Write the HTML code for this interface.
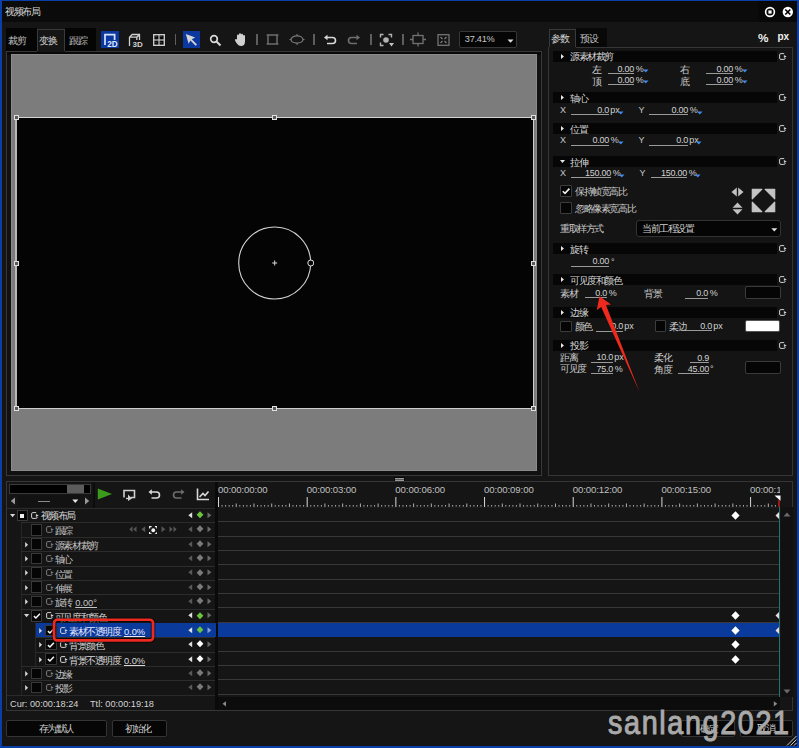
<!DOCTYPE html><html><head><meta charset="utf-8"><style>
*{margin:0;padding:0;box-sizing:border-box}
html,body{width:799px;height:748px;overflow:hidden;background:#151515}
body{position:relative;font-family:"Liberation Sans",sans-serif;color:#c8c8c8;font-size:9px}
div,span,svg{position:absolute}
.t{white-space:nowrap;line-height:1}
.n{font-size:9.5px;color:#c9c9c9}
</style></head><body><div style="left:2px;top:1px;width:795px;height:21px;background:#0b0b0b"></div>
<div style="left:758px;top:1px;width:39px;height:21px;background:#080808"></div>
<span class="t" style="left:5px;top:7px;font-size:9.6px;letter-spacing:-1.4px;color:#d8d8d8">视频布局</span>
<svg style="left:764px;top:6px;" width="12" height="12" viewBox="0 0 12 12"><circle cx="6" cy="6" r="4.4" fill="none" stroke="#fff" stroke-width="1.6"/><rect x="4.4" y="4.4" width="3.2" height="3.2" fill="#fff"/></svg>
<svg style="left:782px;top:6px;" width="12" height="12" viewBox="0 0 12 12"><circle cx="5.8" cy="6" r="5.2" fill="#fff"/><path d="M3.3 3.5L8.3 8.5M8.3 3.5L3.3 8.5" stroke="#000" stroke-width="1.7"/></svg>
<div style="left:6px;top:28px;width:31px;height:23px;background:#050505"></div>
<span class="t" style="left:8.3px;top:36px;font-size:9.6px;letter-spacing:-1.4px;color:#bdbdbd">裁剪</span>
<div style="left:37px;top:29px;width:28px;height:23px;background:#151515;border:1px solid #3a3a3a;border-bottom:none"></div>
<span class="t" style="left:39px;top:36px;font-size:9.6px;letter-spacing:-1.4px;color:#d0d0d0">变换</span>
<div style="left:65px;top:28px;width:31px;height:23px;background:#050505"></div>
<span class="t" style="left:69px;top:36px;font-size:9.6px;letter-spacing:-1.4px;color:#bdbdbd">跟踪</span>
<div style="left:101px;top:31px;width:18px;height:17px;background:#0a389e"></div>
<svg style="left:101px;top:31px;" width="18" height="17" viewBox="0 0 18 17"><path d="M4 14V3.6H13.6V9" fill="none" stroke="#d8e2ff" stroke-width="1.7"/><text x="6.3" y="15.6" font-family="Liberation Sans" font-weight="bold" font-size="8.2" fill="#dfe8ff">2D</text></svg>
<svg style="left:127px;top:32px;" width="18" height="16" viewBox="0 0 18 16"><path d="M2.5 14V5.2L5.2 2.5H12.5V8M2.5 5.2H9.8V8M9.8 5.2L12.5 2.5" fill="none" stroke="#d0d0d0" stroke-width="1.3"/><text x="5.6" y="15.4" font-family="Liberation Sans" font-weight="bold" font-size="8" fill="#d0d0d0">3D</text></svg>
<svg style="left:152px;top:33px;" width="14" height="14" viewBox="0 0 14 14"><rect x="1" y="1" width="12" height="12" fill="#cacaca"/><rect x="2.4" y="2.4" width="4" height="4" fill="#0a0a0a"/><rect x="7.6" y="2.4" width="4" height="4" fill="#0a0a0a"/><rect x="2.4" y="7.6" width="4" height="4" fill="#0a0a0a"/><rect x="7.6" y="7.6" width="4" height="4" fill="#0a0a0a"/><path d="M3.5 3.5h1M8.5 3.5h1M3.5 9.5h1M8.5 9.5h1" stroke="#777" stroke-width="0.8"/></svg>
<div style="left:174.5px;top:34px;width:1.5px;height:11px;background:#5e5e5e"></div>
<div style="left:183px;top:31px;width:17px;height:17px;background:#0a389e"></div>
<svg style="left:183px;top:31px;" width="17" height="17" viewBox="0 0 17 17"><path d="M2.8 3L12.2 6.4L8.8 8.2L14 13.4L12.6 14.8L7.4 9.6L5.6 12.8Z" fill="#d4d4d4"/></svg>
<svg style="left:209px;top:34px;" width="13" height="13" viewBox="0 0 13 13"><circle cx="5" cy="5" r="3.3" fill="none" stroke="#d8d8d8" stroke-width="1.7"/><path d="M7.5 7.5L11.5 11.5" stroke="#d8d8d8" stroke-width="2"/></svg>
<svg style="left:234px;top:32px;" width="13" height="15" viewBox="0 0 13 15"><path d="M3 7V3.5a1 1 0 0 1 2 0V6V2.2a1 1 0 0 1 2 0V6V2.8a1 1 0 0 1 2 0V6.5V4a1 1 0 0 1 2 0V9.5C11 12.5 9.5 14 7 14C5 14 4 13 2.5 11L1 8.5a1 1 0 0 1 1.7-1Z" fill="#d0d0d0"/></svg>
<div style="left:256px;top:34px;width:1.5px;height:11px;background:#5e5e5e"></div>
<svg style="left:266px;top:33px;" width="13" height="13" viewBox="0 0 13 13"><rect x="2" y="2" width="9" height="9" fill="none" stroke="#7a7a7a" stroke-width="1.3"/><path d="M0.5 2H2M11 2H12.5M0.5 11H2M11 11H12.5" stroke="#7a7a7a"/></svg>
<svg style="left:289px;top:33px;" width="16" height="13" viewBox="0 0 16 13"><ellipse cx="8" cy="6.5" rx="6" ry="3.6" fill="none" stroke="#7a7a7a" stroke-width="1.3"/><path d="M8 1V3M8 10V12M0.5 6.5H2M14 6.5H15.5" stroke="#7a7a7a"/></svg>
<div style="left:313px;top:34px;width:1.5px;height:11px;background:#5e5e5e"></div>
<svg style="left:323px;top:34px;" width="14" height="12" viewBox="0 0 14 12"><path d="M3 3.5H9.5A3 3 0 0 1 9.5 9.5H4" fill="none" stroke="#d8d8d8" stroke-width="1.6"/><path d="M1 3.5L4.5 0.8V6.2Z" fill="#d8d8d8"/></svg>
<svg style="left:347px;top:34px;" width="14" height="12" viewBox="0 0 14 12"><path d="M11 3.5H4.5A3 3 0 0 0 4.5 9.5H10" fill="none" stroke="#6e6e6e" stroke-width="1.6"/><path d="M13 3.5L9.5 0.8V6.2Z" fill="#6e6e6e"/></svg>
<div style="left:370px;top:34px;width:1.5px;height:11px;background:#5e5e5e"></div>
<svg style="left:379px;top:33px;" width="16" height="15" viewBox="0 0 16 15"><path d="M1.5 4.5V1.5H4.5M9.5 1.5H12.5V4.5M1.5 9.5V12.5H4.5" fill="none" stroke="#b4b4b4" stroke-width="1.4"/><circle cx="7" cy="7" r="2.8" fill="#b4b4b4"/><path d="M10 10H15L12.5 13.5Z" fill="#c0c0c0"/></svg>
<div style="left:402px;top:34px;width:1.5px;height:11px;background:#5e5e5e"></div>
<svg style="left:410px;top:32px;" width="16" height="15" viewBox="0 0 16 15"><rect x="3" y="3.5" width="10" height="8" fill="none" stroke="#727272" stroke-width="1.3"/><path d="M8 0.5V3.5M8 11.5V14.5M0 7.5H3M13 7.5H16" stroke="#727272" stroke-width="1.3"/></svg>
<svg style="left:437px;top:34px;" width="13" height="12" viewBox="0 0 13 12"><rect x="1" y="0.7" width="11" height="10.6" fill="none" stroke="#7a7a7a" stroke-width="1.2"/><path d="M3.5 3L5.5 5M9.5 3L7.5 5M3.5 9L5.5 7M9.5 9L7.5 7" stroke="#7a7a7a" stroke-width="1.2"/></svg>
<div style="left:459px;top:31px;width:58px;height:17px;background:#050505;border:1px solid #363636;border-radius:2px"></div>
<span class="t" style="left:464.8px;top:35.2px;font-size:9.2px;letter-spacing:-0.25px;color:#c6c6c6">37.41%</span>
<svg style="left:507px;top:38.5px;" width="8" height="5" viewBox="0 0 8 5"><path d="M0.5 0.5H6.5L3.5 3.8Z" fill="#e0e0e0"/></svg>
<div style="left:6px;top:51px;width:536px;height:425px;background:#111111;border:1px solid #383838"></div>
<div style="left:7px;top:52px;width:534px;height:3px;background:#080808"></div>
<div style="left:37px;top:51px;width:28px;height:1px;background:#151515"></div>
<div style="left:11px;top:54px;width:526px;height:417px;background:#7c7c7c;border:1px solid #8a8a8a"></div>
<div style="left:16px;top:117px;width:517px;height:292px;background:#040404"></div>
<div style="left:16px;top:117px;width:518px;height:1px;background:#d4d4d4"></div>
<div style="left:16px;top:408px;width:518px;height:1px;background:#cccccc"></div>
<div style="left:15px;top:117px;width:2px;height:292px;background:#b8b8b8"></div>
<div style="left:533px;top:117px;width:1px;height:292px;background:#cccccc"></div>
<div style="left:13.5px;top:115.0px;width:5px;height:5px;border:1px solid #e0e0e0;background:#5a5a5a"></div>
<div style="left:13.5px;top:260.5px;width:5px;height:5px;border:1px solid #e0e0e0;background:#5a5a5a"></div>
<div style="left:13.5px;top:406.0px;width:5px;height:5px;border:1px solid #e0e0e0;background:#5a5a5a"></div>
<div style="left:272.0px;top:115.0px;width:5px;height:5px;border:1px solid #e0e0e0;background:#5a5a5a"></div>
<div style="left:272.0px;top:406.0px;width:5px;height:5px;border:1px solid #e0e0e0;background:#5a5a5a"></div>
<div style="left:530.5px;top:115.0px;width:5px;height:5px;border:1px solid #e0e0e0;background:#5a5a5a"></div>
<div style="left:530.5px;top:260.5px;width:5px;height:5px;border:1px solid #e0e0e0;background:#5a5a5a"></div>
<div style="left:530.5px;top:406.0px;width:5px;height:5px;border:1px solid #e0e0e0;background:#5a5a5a"></div>
<svg style="left:236px;top:224px;" width="78" height="78" viewBox="0 0 78 78"><circle cx="38.7" cy="39" r="36" fill="none" stroke="#d4d4d4" stroke-width="1.1"/><path d="M38.7 36.5V41.5M36.2 39H41.2" stroke="#ddd" stroke-width="1"/><circle cx="74.8" cy="39" r="3" fill="#050505" stroke="#e0e0e0" stroke-width="1"/></svg>
<div style="left:549px;top:29px;width:27px;height:19px;background:#151515;border:1px solid #3a3a3a;border-bottom:none"></div>
<span class="t" style="left:551px;top:34px;font-size:9.6px;letter-spacing:-1.4px;color:#d0d0d0">参数</span>
<div style="left:576px;top:28px;width:31px;height:19px;background:#080808"></div>
<span class="t" style="left:580px;top:34px;font-size:9.6px;letter-spacing:-1.4px;color:#bdbdbd">预设</span>
<span class="t" style="left:757.5px;top:32.6px;letter-spacing:0;font-size:10.5px;font-weight:bold;color:#f0f0f0;transform:scaleX(1.12);transform-origin:left">%</span>
<span class="t" style="left:777.5px;top:32.3px;letter-spacing:0;font-size:10px;font-weight:bold;color:#f0f0f0">px</span>
<div style="left:548px;top:47px;width:245px;height:429px;border:1px solid #363636;background:#141414"></div>
<div style="left:549px;top:47px;width:27px;height:1px;background:#151515"></div>
<div style="left:553px;top:50.5px;width:224px;height:11px;background:#060606"></div>
<svg style="left:561px;top:53.5px;" width="4" height="6" viewBox="0 0 4 6"><path d="M0 0V5L3 2.5Z" fill="#e8e8e8"/></svg>
<span class="t" style="left:570px;top:52.0px;font-size:9.6px;letter-spacing:-1.4px;color:#d6d6d6">源素材裁剪</span>
<svg style="left:778.8px;top:52.5px;" width="8" height="7" viewBox="0 0 8 7"><path d="M5.2 0.6H1.9Q0.6 0.6 0.6 1.9V5.1Q0.6 6.4 1.9 6.4H4.9Q6.2 6.4 6.2 5.1V4.9" fill="none" stroke="#d0d0d0" stroke-width="1"/><path d="M4.9 2.1L7.7 3.5L4.9 4.9Z" fill="#d0d0d0"/></svg>
<span class="t" style="left:592px;top:64.5px;font-size:9.6px;letter-spacing:-1.4px;">左</span>
<div style="left:607.5px;top:73px;width:26.5px;height:1px;background:#9a9a9a"></div>
<span class="t" style="right:165px;top:64.5px;font-size:9px;letter-spacing:-0.25px;color:#d2d2d2">0.00</span>
<span class="t" style="left:635.8px;top:64.5px;letter-spacing:0;font-size:9px;color:#d2d2d2">%</span>
<svg style="left:643px;top:69px;" width="6" height="4" viewBox="0 0 6 4"><path d="M0 0.5H5.5L2.75 3.5Z" fill="#3d8ef0"/></svg>
<span class="t" style="left:592px;top:76.5px;font-size:9.6px;letter-spacing:-1.4px;">顶</span>
<div style="left:607.5px;top:84px;width:26.5px;height:1px;background:#9a9a9a"></div>
<span class="t" style="right:165px;top:75.5px;font-size:9px;letter-spacing:-0.25px;color:#d2d2d2">0.00</span>
<span class="t" style="left:635.8px;top:75.5px;letter-spacing:0;font-size:9px;color:#d2d2d2">%</span>
<svg style="left:643px;top:80px;" width="6" height="4" viewBox="0 0 6 4"><path d="M0 0.5H5.5L2.75 3.5Z" fill="#3d8ef0"/></svg>
<span class="t" style="left:680px;top:64.5px;font-size:9.6px;letter-spacing:-1.4px;">右</span>
<div style="left:706px;top:73px;width:27px;height:1px;background:#9a9a9a"></div>
<span class="t" style="right:66px;top:64.5px;font-size:9px;letter-spacing:-0.25px;color:#d2d2d2">0.00</span>
<span class="t" style="left:734.8px;top:64.5px;letter-spacing:0;font-size:9px;color:#d2d2d2">%</span>
<svg style="left:742px;top:69px;" width="6" height="4" viewBox="0 0 6 4"><path d="M0 0.5H5.5L2.75 3.5Z" fill="#3d8ef0"/></svg>
<span class="t" style="left:680px;top:76.5px;font-size:9.6px;letter-spacing:-1.4px;">底</span>
<div style="left:706px;top:84px;width:27px;height:1px;background:#9a9a9a"></div>
<span class="t" style="right:66px;top:75.5px;font-size:9px;letter-spacing:-0.25px;color:#d2d2d2">0.00</span>
<span class="t" style="left:734.8px;top:75.5px;letter-spacing:0;font-size:9px;color:#d2d2d2">%</span>
<svg style="left:742px;top:80px;" width="6" height="4" viewBox="0 0 6 4"><path d="M0 0.5H5.5L2.75 3.5Z" fill="#3d8ef0"/></svg>
<div style="left:553px;top:92px;width:224px;height:11px;background:#060606"></div>
<svg style="left:561px;top:95px;" width="4" height="6" viewBox="0 0 4 6"><path d="M0 0V5L3 2.5Z" fill="#e8e8e8"/></svg>
<span class="t" style="left:570px;top:93.5px;font-size:9.6px;letter-spacing:-1.4px;color:#d6d6d6">轴心</span>
<svg style="left:778.8px;top:94px;" width="8" height="7" viewBox="0 0 8 7"><path d="M5.2 0.6H1.9Q0.6 0.6 0.6 1.9V5.1Q0.6 6.4 1.9 6.4H4.9Q6.2 6.4 6.2 5.1V4.9" fill="none" stroke="#d0d0d0" stroke-width="1"/><path d="M4.9 2.1L7.7 3.5L4.9 4.9Z" fill="#d0d0d0"/></svg>
<span class="t" style="left:560px;top:106px;letter-spacing:0;font-size:9px">X</span>
<div style="left:571px;top:114px;width:38px;height:1px;background:#9a9a9a"></div>
<span class="t" style="right:190px;top:105.5px;font-size:9px;letter-spacing:-0.25px;color:#d2d2d2">0.0</span>
<span class="t" style="left:610.2px;top:105.5px;letter-spacing:0;font-size:9px;color:#d2d2d2">px</span>
<svg style="left:618px;top:111px;" width="6" height="4" viewBox="0 0 6 4"><path d="M0 0.5H5.5L2.75 3.5Z" fill="#3d8ef0"/></svg>
<span class="t" style="left:638.5px;top:106px;letter-spacing:0;font-size:9px">Y</span>
<div style="left:649px;top:114px;width:39px;height:1px;background:#9a9a9a"></div>
<span class="t" style="right:111px;top:105.5px;font-size:9px;letter-spacing:-0.25px;color:#d2d2d2">0.00</span>
<span class="t" style="left:689.8px;top:105.5px;letter-spacing:0;font-size:9px;color:#d2d2d2">%</span>
<svg style="left:697px;top:111px;" width="6" height="4" viewBox="0 0 6 4"><path d="M0 0.5H5.5L2.75 3.5Z" fill="#3d8ef0"/></svg>
<div style="left:553px;top:123px;width:224px;height:11px;background:#060606"></div>
<svg style="left:561px;top:126px;" width="4" height="6" viewBox="0 0 4 6"><path d="M0 0V5L3 2.5Z" fill="#e8e8e8"/></svg>
<span class="t" style="left:570px;top:124.5px;font-size:9.6px;letter-spacing:-1.4px;color:#d6d6d6">位置</span>
<svg style="left:778.8px;top:125px;" width="8" height="7" viewBox="0 0 8 7"><path d="M5.2 0.6H1.9Q0.6 0.6 0.6 1.9V5.1Q0.6 6.4 1.9 6.4H4.9Q6.2 6.4 6.2 5.1V4.9" fill="none" stroke="#d0d0d0" stroke-width="1"/><path d="M4.9 2.1L7.7 3.5L4.9 4.9Z" fill="#d0d0d0"/></svg>
<span class="t" style="left:560px;top:136px;letter-spacing:0;font-size:9px">X</span>
<div style="left:571px;top:144.5px;width:38px;height:1px;background:#9a9a9a"></div>
<span class="t" style="right:190px;top:136.0px;font-size:9px;letter-spacing:-0.25px;color:#d2d2d2">0.00</span>
<span class="t" style="left:610.8px;top:136.0px;letter-spacing:0;font-size:9px;color:#d2d2d2">%</span>
<svg style="left:618px;top:141px;" width="6" height="4" viewBox="0 0 6 4"><path d="M0 0.5H5.5L2.75 3.5Z" fill="#3d8ef0"/></svg>
<span class="t" style="left:638.5px;top:136px;letter-spacing:0;font-size:9px">Y</span>
<div style="left:649px;top:144.5px;width:39px;height:1px;background:#9a9a9a"></div>
<span class="t" style="right:111px;top:136.0px;font-size:9px;letter-spacing:-0.25px;color:#d2d2d2">0.0</span>
<span class="t" style="left:689.2px;top:136.0px;letter-spacing:0;font-size:9px;color:#d2d2d2">px</span>
<svg style="left:696px;top:141px;" width="6" height="4" viewBox="0 0 6 4"><path d="M0 0.5H5.5L2.75 3.5Z" fill="#3d8ef0"/></svg>
<div style="left:553px;top:156px;width:224px;height:11px;background:#060606"></div>
<svg style="left:560px;top:160px;" width="6" height="4" viewBox="0 0 6 4"><path d="M0 0H5L2.5 3Z" fill="#e8e8e8"/></svg>
<span class="t" style="left:570px;top:157.5px;font-size:9.6px;letter-spacing:-1.4px;color:#d6d6d6">拉伸</span>
<svg style="left:778.8px;top:158px;" width="8" height="7" viewBox="0 0 8 7"><path d="M5.2 0.6H1.9Q0.6 0.6 0.6 1.9V5.1Q0.6 6.4 1.9 6.4H4.9Q6.2 6.4 6.2 5.1V4.9" fill="none" stroke="#d0d0d0" stroke-width="1"/><path d="M4.9 2.1L7.7 3.5L4.9 4.9Z" fill="#d0d0d0"/></svg>
<span class="t" style="left:560px;top:169px;letter-spacing:0;font-size:9px">X</span>
<div style="left:571px;top:177px;width:40px;height:1px;background:#9a9a9a"></div>
<span class="t" style="right:188px;top:168.5px;font-size:9px;letter-spacing:-0.25px;color:#d2d2d2">150.00</span>
<span class="t" style="left:612.8px;top:168.5px;letter-spacing:0;font-size:9px;color:#d2d2d2">%</span>
<svg style="left:619px;top:174px;" width="6" height="4" viewBox="0 0 6 4"><path d="M0 0.5H5.5L2.75 3.5Z" fill="#3d8ef0"/></svg>
<span class="t" style="left:639.5px;top:169px;letter-spacing:0;font-size:9px">Y</span>
<div style="left:651px;top:177px;width:36px;height:1px;background:#9a9a9a"></div>
<span class="t" style="right:112px;top:168.5px;font-size:9px;letter-spacing:-0.25px;color:#d2d2d2">150.00</span>
<span class="t" style="left:688.8px;top:168.5px;letter-spacing:0;font-size:9px;color:#d2d2d2">%</span>
<svg style="left:695px;top:174px;" width="6" height="4" viewBox="0 0 6 4"><path d="M0 0.5H5.5L2.75 3.5Z" fill="#3d8ef0"/></svg>
<div style="left:560px;top:185px;width:12px;height:12px;background:#050505;border:1px solid #3c3c3c;border-radius:1px"></div>
<svg style="left:560px;top:185px;" width="12" height="12" viewBox="0 0 12 12"><path d="M2.8 6.2L5 8.4L9.4 3.6" fill="none" stroke="#f0f0f0" stroke-width="1.6"/></svg>
<span class="t" style="left:575px;top:186.5px;font-size:9.6px;letter-spacing:-1.4px;">保持帧宽高比</span>
<div style="left:560px;top:202px;width:12px;height:12px;background:#050505;border:1px solid #3c3c3c;border-radius:1px"></div>
<span class="t" style="left:575px;top:203.5px;font-size:9.6px;letter-spacing:-1.4px;">忽略像素宽高比</span>
<svg style="left:731px;top:187px;" width="13" height="10" viewBox="0 0 13 10"><path d="M5.8 0.5V9.5L0.5 5Z M7.2 0.5V9.5L12.5 5Z" fill="#c0c0c0"/></svg>
<svg style="left:732px;top:202px;" width="11" height="13" viewBox="0 0 11 13"><path d="M0.5 5.8H10.5L5.5 0.5Z M0.5 7.2H10.5L5.5 12.5Z" fill="#c0c0c0"/></svg>
<svg style="left:750.5px;top:187.5px;" width="25" height="25" viewBox="0 0 25 25"><path d="M1.3 1.3H10.8L1.3 10.8Z M23.7 1.3H14.2L23.7 10.8Z M1.3 23.7H10.8L1.3 14.2Z M23.7 23.7H14.2L23.7 14.2Z" fill="#c4c4c4" stroke="#c4c4c4" stroke-width="1.2" stroke-linejoin="round"/></svg>
<span class="t" style="left:560px;top:223.5px;font-size:9.6px;letter-spacing:-1.4px;">重取样方式</span>
<div style="left:636px;top:220px;width:145px;height:17px;background:#050505;border:1px solid #333;border-radius:3px"></div>
<span class="t" style="left:642px;top:224px;font-size:9.6px;letter-spacing:-1.4px;color:#d0d0d0">当前工程设置</span>
<svg style="left:771px;top:228px;" width="7" height="4" viewBox="0 0 7 4"><path d="M0.3 0.3H6.3L3.3 3.4Z" fill="#e0e0e0"/></svg>
<div style="left:553px;top:243px;width:224px;height:11px;background:#060606"></div>
<svg style="left:561px;top:246px;" width="4" height="6" viewBox="0 0 4 6"><path d="M0 0V5L3 2.5Z" fill="#e8e8e8"/></svg>
<span class="t" style="left:570px;top:244.5px;font-size:9.6px;letter-spacing:-1.4px;color:#d6d6d6">旋转</span>
<svg style="left:778.8px;top:245px;" width="8" height="7" viewBox="0 0 8 7"><path d="M5.2 0.6H1.9Q0.6 0.6 0.6 1.9V5.1Q0.6 6.4 1.9 6.4H4.9Q6.2 6.4 6.2 5.1V4.9" fill="none" stroke="#d0d0d0" stroke-width="1"/><path d="M4.9 2.1L7.7 3.5L4.9 4.9Z" fill="#d0d0d0"/></svg>
<div style="left:571px;top:265.5px;width:38px;height:1px;background:#9a9a9a"></div>
<span class="t" style="right:190px;top:257.0px;font-size:9px;letter-spacing:-0.25px;color:#d2d2d2">0.00</span>
<span class="t" style="left:611px;top:257.5px;letter-spacing:0;font-size:9px;color:#cfcfcf">°</span>
<div style="left:553px;top:274px;width:224px;height:11px;background:#060606"></div>
<svg style="left:561px;top:277px;" width="4" height="6" viewBox="0 0 4 6"><path d="M0 0V5L3 2.5Z" fill="#e8e8e8"/></svg>
<span class="t" style="left:570px;top:275.5px;font-size:9.6px;letter-spacing:-1.4px;color:#d6d6d6">可见度和颜色</span>
<svg style="left:778.8px;top:276px;" width="8" height="7" viewBox="0 0 8 7"><path d="M5.2 0.6H1.9Q0.6 0.6 0.6 1.9V5.1Q0.6 6.4 1.9 6.4H4.9Q6.2 6.4 6.2 5.1V4.9" fill="none" stroke="#d0d0d0" stroke-width="1"/><path d="M4.9 2.1L7.7 3.5L4.9 4.9Z" fill="#d0d0d0"/></svg>
<span class="t" style="left:560px;top:288.5px;font-size:9.6px;letter-spacing:-1.4px;">素材</span>
<div style="left:585px;top:297px;width:22px;height:1px;background:#9a9a9a"></div>
<span class="t" style="right:192px;top:288.5px;font-size:9px;letter-spacing:-0.25px;color:#d2d2d2">0.0</span>
<span class="t" style="left:608.8px;top:288.5px;letter-spacing:0;font-size:9px;color:#d2d2d2">%</span>
<span class="t" style="left:644px;top:288.5px;font-size:9.6px;letter-spacing:-1.4px;">背景</span>
<div style="left:685px;top:297.5px;width:23px;height:1px;background:#9a9a9a"></div>
<span class="t" style="right:91px;top:289.0px;font-size:9px;letter-spacing:-0.25px;color:#d2d2d2">0.0</span>
<span class="t" style="left:709.8px;top:289.0px;letter-spacing:0;font-size:9px;color:#d2d2d2">%</span>
<div style="left:744.5px;top:286px;width:36px;height:13px;background:#050505;border:1px solid #3a3a3a;border-radius:2px"></div>
<div style="left:553px;top:306.5px;width:224px;height:11px;background:#060606"></div>
<svg style="left:561px;top:309.5px;" width="4" height="6" viewBox="0 0 4 6"><path d="M0 0V5L3 2.5Z" fill="#e8e8e8"/></svg>
<span class="t" style="left:570px;top:308.0px;font-size:9.6px;letter-spacing:-1.4px;color:#d6d6d6">边缘</span>
<svg style="left:778.8px;top:308.5px;" width="8" height="7" viewBox="0 0 8 7"><path d="M5.2 0.6H1.9Q0.6 0.6 0.6 1.9V5.1Q0.6 6.4 1.9 6.4H4.9Q6.2 6.4 6.2 5.1V4.9" fill="none" stroke="#d0d0d0" stroke-width="1"/><path d="M4.9 2.1L7.7 3.5L4.9 4.9Z" fill="#d0d0d0"/></svg>
<div style="left:560px;top:320.5px;width:11.5px;height:11.5px;background:#050505;border:1px solid #3c3c3c;border-radius:1px"></div>
<span class="t" style="left:574.5px;top:321.5px;font-size:9.6px;letter-spacing:-1.4px;">颜色</span>
<div style="left:596px;top:330.5px;width:27px;height:1px;background:#9a9a9a"></div>
<span class="t" style="right:176px;top:322.0px;font-size:9px;letter-spacing:-0.25px;color:#d2d2d2">0.0</span>
<span class="t" style="left:624.2px;top:322.0px;letter-spacing:0;font-size:9px;color:#d2d2d2">px</span>
<div style="left:654.5px;top:320px;width:11.5px;height:11.5px;background:#050505;border:1px solid #3c3c3c;border-radius:1px"></div>
<span class="t" style="left:669px;top:321.5px;font-size:9.6px;letter-spacing:-1.4px;">柔边</span>
<div style="left:686px;top:330px;width:26px;height:1px;background:#9a9a9a"></div>
<span class="t" style="right:87px;top:321.5px;font-size:9px;letter-spacing:-0.25px;color:#d2d2d2">0.0</span>
<span class="t" style="left:713.2px;top:321.5px;letter-spacing:0;font-size:9px;color:#d2d2d2">px</span>
<div style="left:745px;top:320px;width:35px;height:12px;background:#ffffff;border:1px solid #555;border-radius:2px"></div>
<div style="left:553px;top:339.5px;width:224px;height:11px;background:#060606"></div>
<svg style="left:561px;top:342.5px;" width="4" height="6" viewBox="0 0 4 6"><path d="M0 0V5L3 2.5Z" fill="#e8e8e8"/></svg>
<span class="t" style="left:570px;top:341.0px;font-size:9.6px;letter-spacing:-1.4px;color:#d6d6d6">投影</span>
<svg style="left:778.8px;top:341.5px;" width="8" height="7" viewBox="0 0 8 7"><path d="M5.2 0.6H1.9Q0.6 0.6 0.6 1.9V5.1Q0.6 6.4 1.9 6.4H4.9Q6.2 6.4 6.2 5.1V4.9" fill="none" stroke="#d0d0d0" stroke-width="1"/><path d="M4.9 2.1L7.7 3.5L4.9 4.9Z" fill="#d0d0d0"/></svg>
<span class="t" style="left:560px;top:353px;font-size:9.6px;letter-spacing:-1.4px;">距离</span>
<div style="left:591px;top:361.5px;width:22px;height:1px;background:#9a9a9a"></div>
<span class="t" style="right:186px;top:353.0px;font-size:9px;letter-spacing:-0.25px;color:#d2d2d2">10.0</span>
<span class="t" style="left:614.2px;top:353.0px;letter-spacing:0;font-size:9px;color:#d2d2d2">px</span>
<span class="t" style="left:560px;top:363.5px;font-size:9.6px;letter-spacing:-1.4px;">可见度</span>
<div style="left:591px;top:373px;width:22px;height:1px;background:#9a9a9a"></div>
<span class="t" style="right:186px;top:364.5px;font-size:9px;letter-spacing:-0.25px;color:#d2d2d2">75.0</span>
<span class="t" style="left:614.8px;top:364.5px;letter-spacing:0;font-size:9px;color:#d2d2d2">%</span>
<span class="t" style="left:654px;top:353px;font-size:9.6px;letter-spacing:-1.4px;">柔化</span>
<div style="left:690px;top:362px;width:19px;height:1px;background:#9a9a9a"></div>
<span class="t" style="right:90px;top:353.5px;font-size:9px;letter-spacing:-0.25px;color:#d2d2d2">0.9</span>
<span class="t" style="left:654px;top:364.5px;font-size:9.6px;letter-spacing:-1.4px;">角度</span>
<div style="left:678px;top:373px;width:31px;height:1px;background:#9a9a9a"></div>
<span class="t" style="right:90px;top:364.5px;font-size:9px;letter-spacing:-0.25px;color:#d2d2d2">45.00</span>
<span class="t" style="left:710px;top:365px;letter-spacing:0;font-size:9px;color:#cfcfcf">°</span>
<div style="left:744.5px;top:360.5px;width:36px;height:13px;background:#050505;border:1px solid #3a3a3a;border-radius:2px"></div>
<div style="left:394px;top:477px;width:11px;height:5px;background:#060606"></div>
<div style="left:395px;top:478px;width:9px;height:3px;background:#9a9a9a"></div>
<div style="left:395px;top:479px;width:9px;height:1px;background:#5a5a5a"></div>
<div style="left:6px;top:481px;width:787px;height:230px;border:1px solid #363636;background:#151515"></div>
<div style="left:8.5px;top:483.5px;width:82px;height:10px;background:#000;border:1px solid #3a3a3a"></div>
<div style="left:67px;top:484.5px;width:17px;height:8px;background:#5c5c5c"></div>
<svg style="left:10px;top:497px;" width="6" height="8" viewBox="0 0 6 8"><path d="M5 0.5V7.5L0.8 4Z" fill="#9a9a9a"/></svg>
<div style="left:18px;top:495px;width:62px;height:12px;background:#121212"></div>
<div style="left:38px;top:500.5px;width:12px;height:1.2px;background:#8a8a8a"></div>
<svg style="left:72px;top:499px;" width="7" height="5" viewBox="0 0 7 5"><path d="M0.3 0.5H6.3L3.3 4Z" fill="#e6e6e6"/></svg>
<svg style="left:83.5px;top:497px;" width="6" height="8" viewBox="0 0 6 8"><path d="M1 0.5V7.5L5.2 4Z" fill="#9a9a9a"/></svg>
<div style="left:93px;top:482px;width:1.5px;height:26px;background:#0c0c0c"></div>
<svg style="left:97px;top:488px;" width="16" height="12" viewBox="0 0 16 12"><path d="M0.8 0.5V11.5L15 6Z" fill="#3c9a1c"/></svg>
<svg style="left:122px;top:489px;" width="15" height="13" viewBox="0 0 15 13"><path d="M2 8.5V1.5H12.5V8.5H9" fill="none" stroke="#d0d0d0" stroke-width="1.6"/><path d="M6 5.5V12L10 9.5Z" fill="#d0d0d0"/><path d="M4 9.5H7" stroke="#d0d0d0" stroke-width="1.4"/></svg>
<svg style="left:148px;top:489px;" width="13" height="11" viewBox="0 0 13 11"><path d="M3 3H8.5A3 3 0 0 1 8.5 9H3.5" fill="none" stroke="#d8d8d8" stroke-width="1.6"/><path d="M0.5 3L3.8 0.3V5.7Z" fill="#d8d8d8"/></svg>
<svg style="left:172px;top:489px;" width="13" height="11" viewBox="0 0 13 11"><path d="M10 3H4.5A3 3 0 0 0 4.5 9H9.5" fill="none" stroke="#6e6e6e" stroke-width="1.6"/><path d="M12.5 3L9.2 0.3V5.7Z" fill="#6e6e6e"/></svg>
<svg style="left:196px;top:488px;" width="14" height="13" viewBox="0 0 14 13"><path d="M1.5 0.5V11.5H13" fill="none" stroke="#d8d8d8" stroke-width="1.6"/><path d="M3.5 9L7 5.5L9 7.5L12.5 3.5" fill="none" stroke="#d8d8d8" stroke-width="1.6"/></svg>
<div style="left:215px;top:482px;width:3px;height:228px;background:#0a0a0a"></div>
<div style="left:218px;top:482px;width:562px;height:26px;overflow:hidden"><span class="t" style="left:0.00px;top:2.7px;font-size:9.6px;letter-spacing:-0.1px;color:#c0c0c0">00:00:00:00</span><span class="t" style="left:88.68px;top:2.7px;font-size:9.6px;letter-spacing:-0.1px;color:#c0c0c0">00:00:03:00</span><span class="t" style="left:177.36px;top:2.7px;font-size:9.6px;letter-spacing:-0.1px;color:#c0c0c0">00:00:06:00</span><span class="t" style="left:266.04px;top:2.7px;font-size:9.6px;letter-spacing:-0.1px;color:#c0c0c0">00:00:09:00</span><span class="t" style="left:354.72px;top:2.7px;font-size:9.6px;letter-spacing:-0.1px;color:#c0c0c0">00:00:12:00</span><span class="t" style="left:443.40px;top:2.7px;font-size:9.6px;letter-spacing:-0.1px;color:#c0c0c0">00:00:15:00</span><span class="t" style="left:532.08px;top:2.7px;font-size:9.6px;letter-spacing:-0.1px;color:#c0c0c0">00:00:18:00</span><svg style="left:0;top:0" width="562" height="26"><rect x="0.00" y="15" width="1" height="10" fill="#d8d8d8"/><rect x="3.55" y="23" width="1" height="1.6" fill="#a8a8a8"/><rect x="7.09" y="23" width="1" height="1.6" fill="#a8a8a8"/><rect x="10.64" y="23" width="1" height="1.6" fill="#a8a8a8"/><rect x="14.19" y="23" width="1" height="1.6" fill="#a8a8a8"/><rect x="17.74" y="21.5" width="1" height="3.5" fill="#b0b0b0"/><rect x="21.28" y="23" width="1" height="1.6" fill="#a8a8a8"/><rect x="24.83" y="23" width="1" height="1.6" fill="#a8a8a8"/><rect x="28.38" y="23" width="1" height="1.6" fill="#a8a8a8"/><rect x="31.92" y="23" width="1" height="1.6" fill="#a8a8a8"/><rect x="35.47" y="21.5" width="1" height="3.5" fill="#b0b0b0"/><rect x="39.02" y="23" width="1" height="1.6" fill="#a8a8a8"/><rect x="42.57" y="23" width="1" height="1.6" fill="#a8a8a8"/><rect x="46.11" y="23" width="1" height="1.6" fill="#a8a8a8"/><rect x="49.66" y="23" width="1" height="1.6" fill="#a8a8a8"/><rect x="53.21" y="21.5" width="1" height="3.5" fill="#b0b0b0"/><rect x="56.76" y="23" width="1" height="1.6" fill="#a8a8a8"/><rect x="60.30" y="23" width="1" height="1.6" fill="#a8a8a8"/><rect x="63.85" y="23" width="1" height="1.6" fill="#a8a8a8"/><rect x="67.40" y="23" width="1" height="1.6" fill="#a8a8a8"/><rect x="70.94" y="21.5" width="1" height="3.5" fill="#b0b0b0"/><rect x="74.49" y="23" width="1" height="1.6" fill="#a8a8a8"/><rect x="78.04" y="23" width="1" height="1.6" fill="#a8a8a8"/><rect x="81.59" y="23" width="1" height="1.6" fill="#a8a8a8"/><rect x="85.13" y="23" width="1" height="1.6" fill="#a8a8a8"/><rect x="88.68" y="15" width="1" height="10" fill="#d8d8d8"/><rect x="92.23" y="23" width="1" height="1.6" fill="#a8a8a8"/><rect x="95.77" y="23" width="1" height="1.6" fill="#a8a8a8"/><rect x="99.32" y="23" width="1" height="1.6" fill="#a8a8a8"/><rect x="102.87" y="23" width="1" height="1.6" fill="#a8a8a8"/><rect x="106.42" y="21.5" width="1" height="3.5" fill="#b0b0b0"/><rect x="109.96" y="23" width="1" height="1.6" fill="#a8a8a8"/><rect x="113.51" y="23" width="1" height="1.6" fill="#a8a8a8"/><rect x="117.06" y="23" width="1" height="1.6" fill="#a8a8a8"/><rect x="120.60" y="23" width="1" height="1.6" fill="#a8a8a8"/><rect x="124.15" y="21.5" width="1" height="3.5" fill="#b0b0b0"/><rect x="127.70" y="23" width="1" height="1.6" fill="#a8a8a8"/><rect x="131.25" y="23" width="1" height="1.6" fill="#a8a8a8"/><rect x="134.79" y="23" width="1" height="1.6" fill="#a8a8a8"/><rect x="138.34" y="23" width="1" height="1.6" fill="#a8a8a8"/><rect x="141.89" y="21.5" width="1" height="3.5" fill="#b0b0b0"/><rect x="145.44" y="23" width="1" height="1.6" fill="#a8a8a8"/><rect x="148.98" y="23" width="1" height="1.6" fill="#a8a8a8"/><rect x="152.53" y="23" width="1" height="1.6" fill="#a8a8a8"/><rect x="156.08" y="23" width="1" height="1.6" fill="#a8a8a8"/><rect x="159.62" y="21.5" width="1" height="3.5" fill="#b0b0b0"/><rect x="163.17" y="23" width="1" height="1.6" fill="#a8a8a8"/><rect x="166.72" y="23" width="1" height="1.6" fill="#a8a8a8"/><rect x="170.27" y="23" width="1" height="1.6" fill="#a8a8a8"/><rect x="173.81" y="23" width="1" height="1.6" fill="#a8a8a8"/><rect x="177.36" y="15" width="1" height="10" fill="#d8d8d8"/><rect x="180.91" y="23" width="1" height="1.6" fill="#a8a8a8"/><rect x="184.45" y="23" width="1" height="1.6" fill="#a8a8a8"/><rect x="188.00" y="23" width="1" height="1.6" fill="#a8a8a8"/><rect x="191.55" y="23" width="1" height="1.6" fill="#a8a8a8"/><rect x="195.10" y="21.5" width="1" height="3.5" fill="#b0b0b0"/><rect x="198.64" y="23" width="1" height="1.6" fill="#a8a8a8"/><rect x="202.19" y="23" width="1" height="1.6" fill="#a8a8a8"/><rect x="205.74" y="23" width="1" height="1.6" fill="#a8a8a8"/><rect x="209.28" y="23" width="1" height="1.6" fill="#a8a8a8"/><rect x="212.83" y="21.5" width="1" height="3.5" fill="#b0b0b0"/><rect x="216.38" y="23" width="1" height="1.6" fill="#a8a8a8"/><rect x="219.93" y="23" width="1" height="1.6" fill="#a8a8a8"/><rect x="223.47" y="23" width="1" height="1.6" fill="#a8a8a8"/><rect x="227.02" y="23" width="1" height="1.6" fill="#a8a8a8"/><rect x="230.57" y="21.5" width="1" height="3.5" fill="#b0b0b0"/><rect x="234.12" y="23" width="1" height="1.6" fill="#a8a8a8"/><rect x="237.66" y="23" width="1" height="1.6" fill="#a8a8a8"/><rect x="241.21" y="23" width="1" height="1.6" fill="#a8a8a8"/><rect x="244.76" y="23" width="1" height="1.6" fill="#a8a8a8"/><rect x="248.30" y="21.5" width="1" height="3.5" fill="#b0b0b0"/><rect x="251.85" y="23" width="1" height="1.6" fill="#a8a8a8"/><rect x="255.40" y="23" width="1" height="1.6" fill="#a8a8a8"/><rect x="258.95" y="23" width="1" height="1.6" fill="#a8a8a8"/><rect x="262.49" y="23" width="1" height="1.6" fill="#a8a8a8"/><rect x="266.04" y="15" width="1" height="10" fill="#d8d8d8"/><rect x="269.59" y="23" width="1" height="1.6" fill="#a8a8a8"/><rect x="273.13" y="23" width="1" height="1.6" fill="#a8a8a8"/><rect x="276.68" y="23" width="1" height="1.6" fill="#a8a8a8"/><rect x="280.23" y="23" width="1" height="1.6" fill="#a8a8a8"/><rect x="283.78" y="21.5" width="1" height="3.5" fill="#b0b0b0"/><rect x="287.32" y="23" width="1" height="1.6" fill="#a8a8a8"/><rect x="290.87" y="23" width="1" height="1.6" fill="#a8a8a8"/><rect x="294.42" y="23" width="1" height="1.6" fill="#a8a8a8"/><rect x="297.96" y="23" width="1" height="1.6" fill="#a8a8a8"/><rect x="301.51" y="21.5" width="1" height="3.5" fill="#b0b0b0"/><rect x="305.06" y="23" width="1" height="1.6" fill="#a8a8a8"/><rect x="308.61" y="23" width="1" height="1.6" fill="#a8a8a8"/><rect x="312.15" y="23" width="1" height="1.6" fill="#a8a8a8"/><rect x="315.70" y="23" width="1" height="1.6" fill="#a8a8a8"/><rect x="319.25" y="21.5" width="1" height="3.5" fill="#b0b0b0"/><rect x="322.80" y="23" width="1" height="1.6" fill="#a8a8a8"/><rect x="326.34" y="23" width="1" height="1.6" fill="#a8a8a8"/><rect x="329.89" y="23" width="1" height="1.6" fill="#a8a8a8"/><rect x="333.44" y="23" width="1" height="1.6" fill="#a8a8a8"/><rect x="336.98" y="21.5" width="1" height="3.5" fill="#b0b0b0"/><rect x="340.53" y="23" width="1" height="1.6" fill="#a8a8a8"/><rect x="344.08" y="23" width="1" height="1.6" fill="#a8a8a8"/><rect x="347.63" y="23" width="1" height="1.6" fill="#a8a8a8"/><rect x="351.17" y="23" width="1" height="1.6" fill="#a8a8a8"/><rect x="354.72" y="15" width="1" height="10" fill="#d8d8d8"/><rect x="358.27" y="23" width="1" height="1.6" fill="#a8a8a8"/><rect x="361.81" y="23" width="1" height="1.6" fill="#a8a8a8"/><rect x="365.36" y="23" width="1" height="1.6" fill="#a8a8a8"/><rect x="368.91" y="23" width="1" height="1.6" fill="#a8a8a8"/><rect x="372.46" y="21.5" width="1" height="3.5" fill="#b0b0b0"/><rect x="376.00" y="23" width="1" height="1.6" fill="#a8a8a8"/><rect x="379.55" y="23" width="1" height="1.6" fill="#a8a8a8"/><rect x="383.10" y="23" width="1" height="1.6" fill="#a8a8a8"/><rect x="386.64" y="23" width="1" height="1.6" fill="#a8a8a8"/><rect x="390.19" y="21.5" width="1" height="3.5" fill="#b0b0b0"/><rect x="393.74" y="23" width="1" height="1.6" fill="#a8a8a8"/><rect x="397.29" y="23" width="1" height="1.6" fill="#a8a8a8"/><rect x="400.83" y="23" width="1" height="1.6" fill="#a8a8a8"/><rect x="404.38" y="23" width="1" height="1.6" fill="#a8a8a8"/><rect x="407.93" y="21.5" width="1" height="3.5" fill="#b0b0b0"/><rect x="411.48" y="23" width="1" height="1.6" fill="#a8a8a8"/><rect x="415.02" y="23" width="1" height="1.6" fill="#a8a8a8"/><rect x="418.57" y="23" width="1" height="1.6" fill="#a8a8a8"/><rect x="422.12" y="23" width="1" height="1.6" fill="#a8a8a8"/><rect x="425.66" y="21.5" width="1" height="3.5" fill="#b0b0b0"/><rect x="429.21" y="23" width="1" height="1.6" fill="#a8a8a8"/><rect x="432.76" y="23" width="1" height="1.6" fill="#a8a8a8"/><rect x="436.31" y="23" width="1" height="1.6" fill="#a8a8a8"/><rect x="439.85" y="23" width="1" height="1.6" fill="#a8a8a8"/><rect x="443.40" y="15" width="1" height="10" fill="#d8d8d8"/><rect x="446.95" y="23" width="1" height="1.6" fill="#a8a8a8"/><rect x="450.49" y="23" width="1" height="1.6" fill="#a8a8a8"/><rect x="454.04" y="23" width="1" height="1.6" fill="#a8a8a8"/><rect x="457.59" y="23" width="1" height="1.6" fill="#a8a8a8"/><rect x="461.14" y="21.5" width="1" height="3.5" fill="#b0b0b0"/><rect x="464.68" y="23" width="1" height="1.6" fill="#a8a8a8"/><rect x="468.23" y="23" width="1" height="1.6" fill="#a8a8a8"/><rect x="471.78" y="23" width="1" height="1.6" fill="#a8a8a8"/><rect x="475.32" y="23" width="1" height="1.6" fill="#a8a8a8"/><rect x="478.87" y="21.5" width="1" height="3.5" fill="#b0b0b0"/><rect x="482.42" y="23" width="1" height="1.6" fill="#a8a8a8"/><rect x="485.97" y="23" width="1" height="1.6" fill="#a8a8a8"/><rect x="489.51" y="23" width="1" height="1.6" fill="#a8a8a8"/><rect x="493.06" y="23" width="1" height="1.6" fill="#a8a8a8"/><rect x="496.61" y="21.5" width="1" height="3.5" fill="#b0b0b0"/><rect x="500.16" y="23" width="1" height="1.6" fill="#a8a8a8"/><rect x="503.70" y="23" width="1" height="1.6" fill="#a8a8a8"/><rect x="507.25" y="23" width="1" height="1.6" fill="#a8a8a8"/><rect x="510.80" y="23" width="1" height="1.6" fill="#a8a8a8"/><rect x="514.34" y="21.5" width="1" height="3.5" fill="#b0b0b0"/><rect x="517.89" y="23" width="1" height="1.6" fill="#a8a8a8"/><rect x="521.44" y="23" width="1" height="1.6" fill="#a8a8a8"/><rect x="524.99" y="23" width="1" height="1.6" fill="#a8a8a8"/><rect x="528.53" y="23" width="1" height="1.6" fill="#a8a8a8"/><rect x="532.08" y="15" width="1" height="10" fill="#d8d8d8"/><rect x="535.63" y="23" width="1" height="1.6" fill="#a8a8a8"/><rect x="539.17" y="23" width="1" height="1.6" fill="#a8a8a8"/><rect x="542.72" y="23" width="1" height="1.6" fill="#a8a8a8"/><rect x="546.27" y="23" width="1" height="1.6" fill="#a8a8a8"/><rect x="549.82" y="21.5" width="1" height="3.5" fill="#b0b0b0"/><rect x="553.36" y="23" width="1" height="1.6" fill="#a8a8a8"/><rect x="556.91" y="23" width="1" height="1.6" fill="#a8a8a8"/><rect x="560.46" y="23" width="1" height="1.6" fill="#a8a8a8"/></svg></div>
<div style="left:21px;top:522.5px;width:1px;height:173px;background:#262626"></div>
<div style="left:35px;top:623px;width:1px;height:43px;background:#262626"></div>
<svg style="left:10.0px;top:514.0px;" width="6" height="4" viewBox="0 0 6 4"><path d="M0 0H5.2L2.6 3.2Z" fill="#d8d8d8"/></svg>
<div style="left:16.5px;top:509.7px;width:11.5px;height:11.5px;background:#050505;border:1px solid #383838"></div>
<div style="left:20.3px;top:513.5px;width:4px;height:4px;background:#f0f0f0"></div>
<svg style="left:31.3px;top:512.0px;" width="8" height="7" viewBox="0 0 8 7"><path d="M5.2 0.6H1.9Q0.6 0.6 0.6 1.9V5.1Q0.6 6.4 1.9 6.4H4.9Q6.2 6.4 6.2 5.1V4.9" fill="none" stroke="#d0d0d0" stroke-width="1"/><path d="M4.9 2.1L7.7 3.5L4.9 4.9Z" fill="#d0d0d0"/></svg>
<span class="t" style="left:40.5px;top:511.3px;font-size:9.6px;letter-spacing:-1.4px;color:#d8d8d8">视频布局</span>
<svg style="left:187.5px;top:512.0px;" width="5" height="7" viewBox="0 0 5 7"><path d="M4.2 0.2V6.2L0.3 3.2Z" fill="#e0e0e0"/></svg>
<svg style="left:195.5px;top:511.1px;" width="8" height="8" viewBox="0 0 8 8"><path d="M4 0.3L7.4 3.8L4 7.3L0.6 3.8Z" fill="#6cc43c"/></svg>
<svg style="left:207px;top:512.0px;" width="5" height="7" viewBox="0 0 5 7"><path d="M0.5 0.2V6.2L4.4 3.2Z" fill="#6a6a6a"/></svg>
<div style="left:218px;top:521px;width:562px;height:1px;background:#383838"></div>
<div style="left:21px;top:522.45px;width:194px;height:1px;background:#2c2c2c"></div>
<div style="left:30.8px;top:524.0500000000001px;width:11.5px;height:11.5px;background:#050505;border:1px solid #383838"></div>
<svg style="left:45.6px;top:526.35px;" width="8" height="7" viewBox="0 0 8 7"><path d="M5.2 0.6H1.9Q0.6 0.6 0.6 1.9V5.1Q0.6 6.4 1.9 6.4H4.9Q6.2 6.4 6.2 5.1V4.9" fill="none" stroke="#7a7a7a" stroke-width="1"/><path d="M4.9 2.1L7.7 3.5L4.9 4.9Z" fill="#7a7a7a"/></svg>
<span class="t" style="left:54.8px;top:526.45px;font-size:9.6px;letter-spacing:-1.4px;color:#c4c4c4">跟踪</span>
<svg style="left:187.5px;top:526.35px;" width="5" height="7" viewBox="0 0 5 7"><path d="M4.2 0.2V6.2L0.3 3.2Z" fill="#5a5a5a"/></svg>
<svg style="left:195.5px;top:525.45px;" width="8" height="8" viewBox="0 0 8 8"><path d="M4 0.3L7.4 3.8L4 7.3L0.6 3.8Z" fill="#7a7a7a"/></svg>
<svg style="left:207px;top:526.35px;" width="5" height="7" viewBox="0 0 5 7"><path d="M0.5 0.2V6.2L4.4 3.2Z" fill="#6a6a6a"/></svg>
<div style="left:218px;top:536px;width:562px;height:1px;background:#383838"></div>
<div style="left:21px;top:536.8000000000001px;width:194px;height:1px;background:#2c2c2c"></div>
<svg style="left:24.8px;top:541.7px;" width="4" height="6" viewBox="0 0 4 6"><path d="M0.2 0V5.4L3 2.7Z" fill="#d8d8d8"/></svg>
<div style="left:30.8px;top:538.4000000000001px;width:11.5px;height:11.5px;background:#050505;border:1px solid #383838"></div>
<svg style="left:45.6px;top:540.7px;" width="8" height="7" viewBox="0 0 8 7"><path d="M5.2 0.6H1.9Q0.6 0.6 0.6 1.9V5.1Q0.6 6.4 1.9 6.4H4.9Q6.2 6.4 6.2 5.1V4.9" fill="none" stroke="#7a7a7a" stroke-width="1"/><path d="M4.9 2.1L7.7 3.5L4.9 4.9Z" fill="#7a7a7a"/></svg>
<span class="t" style="left:54.8px;top:540.8000000000001px;font-size:9.6px;letter-spacing:-1.4px;color:#c4c4c4">源素材裁剪</span>
<svg style="left:187.5px;top:540.7px;" width="5" height="7" viewBox="0 0 5 7"><path d="M4.2 0.2V6.2L0.3 3.2Z" fill="#5a5a5a"/></svg>
<svg style="left:195.5px;top:539.8000000000001px;" width="8" height="8" viewBox="0 0 8 8"><path d="M4 0.3L7.4 3.8L4 7.3L0.6 3.8Z" fill="#7a7a7a"/></svg>
<svg style="left:207px;top:540.7px;" width="5" height="7" viewBox="0 0 5 7"><path d="M0.5 0.2V6.2L4.4 3.2Z" fill="#6a6a6a"/></svg>
<div style="left:218px;top:550px;width:562px;height:1px;background:#383838"></div>
<div style="left:21px;top:551.15px;width:194px;height:1px;background:#2c2c2c"></div>
<svg style="left:24.8px;top:556.05px;" width="4" height="6" viewBox="0 0 4 6"><path d="M0.2 0V5.4L3 2.7Z" fill="#d8d8d8"/></svg>
<div style="left:30.8px;top:552.75px;width:11.5px;height:11.5px;background:#050505;border:1px solid #383838"></div>
<svg style="left:45.6px;top:555.05px;" width="8" height="7" viewBox="0 0 8 7"><path d="M5.2 0.6H1.9Q0.6 0.6 0.6 1.9V5.1Q0.6 6.4 1.9 6.4H4.9Q6.2 6.4 6.2 5.1V4.9" fill="none" stroke="#7a7a7a" stroke-width="1"/><path d="M4.9 2.1L7.7 3.5L4.9 4.9Z" fill="#7a7a7a"/></svg>
<span class="t" style="left:54.8px;top:555.15px;font-size:9.6px;letter-spacing:-1.4px;color:#c4c4c4">轴心</span>
<svg style="left:187.5px;top:555.05px;" width="5" height="7" viewBox="0 0 5 7"><path d="M4.2 0.2V6.2L0.3 3.2Z" fill="#5a5a5a"/></svg>
<svg style="left:195.5px;top:554.15px;" width="8" height="8" viewBox="0 0 8 8"><path d="M4 0.3L7.4 3.8L4 7.3L0.6 3.8Z" fill="#7a7a7a"/></svg>
<svg style="left:207px;top:555.05px;" width="5" height="7" viewBox="0 0 5 7"><path d="M0.5 0.2V6.2L4.4 3.2Z" fill="#6a6a6a"/></svg>
<div style="left:218px;top:564px;width:562px;height:1px;background:#383838"></div>
<div style="left:21px;top:565.5px;width:194px;height:1px;background:#2c2c2c"></div>
<svg style="left:24.8px;top:570.4px;" width="4" height="6" viewBox="0 0 4 6"><path d="M0.2 0V5.4L3 2.7Z" fill="#d8d8d8"/></svg>
<div style="left:30.8px;top:567.1px;width:11.5px;height:11.5px;background:#050505;border:1px solid #383838"></div>
<svg style="left:45.6px;top:569.4px;" width="8" height="7" viewBox="0 0 8 7"><path d="M5.2 0.6H1.9Q0.6 0.6 0.6 1.9V5.1Q0.6 6.4 1.9 6.4H4.9Q6.2 6.4 6.2 5.1V4.9" fill="none" stroke="#7a7a7a" stroke-width="1"/><path d="M4.9 2.1L7.7 3.5L4.9 4.9Z" fill="#7a7a7a"/></svg>
<span class="t" style="left:54.8px;top:569.5px;font-size:9.6px;letter-spacing:-1.4px;color:#c4c4c4">位置</span>
<svg style="left:187.5px;top:569.4px;" width="5" height="7" viewBox="0 0 5 7"><path d="M4.2 0.2V6.2L0.3 3.2Z" fill="#5a5a5a"/></svg>
<svg style="left:195.5px;top:568.5px;" width="8" height="8" viewBox="0 0 8 8"><path d="M4 0.3L7.4 3.8L4 7.3L0.6 3.8Z" fill="#7a7a7a"/></svg>
<svg style="left:207px;top:569.4px;" width="5" height="7" viewBox="0 0 5 7"><path d="M0.5 0.2V6.2L4.4 3.2Z" fill="#6a6a6a"/></svg>
<div style="left:218px;top:579px;width:562px;height:1px;background:#383838"></div>
<div style="left:21px;top:579.85px;width:194px;height:1px;background:#2c2c2c"></div>
<svg style="left:24.8px;top:584.75px;" width="4" height="6" viewBox="0 0 4 6"><path d="M0.2 0V5.4L3 2.7Z" fill="#d8d8d8"/></svg>
<div style="left:30.8px;top:581.45px;width:11.5px;height:11.5px;background:#050505;border:1px solid #383838"></div>
<svg style="left:45.6px;top:583.75px;" width="8" height="7" viewBox="0 0 8 7"><path d="M5.2 0.6H1.9Q0.6 0.6 0.6 1.9V5.1Q0.6 6.4 1.9 6.4H4.9Q6.2 6.4 6.2 5.1V4.9" fill="none" stroke="#7a7a7a" stroke-width="1"/><path d="M4.9 2.1L7.7 3.5L4.9 4.9Z" fill="#7a7a7a"/></svg>
<span class="t" style="left:54.8px;top:583.85px;font-size:9.6px;letter-spacing:-1.4px;color:#c4c4c4">伸展</span>
<svg style="left:187.5px;top:583.75px;" width="5" height="7" viewBox="0 0 5 7"><path d="M4.2 0.2V6.2L0.3 3.2Z" fill="#5a5a5a"/></svg>
<svg style="left:195.5px;top:582.85px;" width="8" height="8" viewBox="0 0 8 8"><path d="M4 0.3L7.4 3.8L4 7.3L0.6 3.8Z" fill="#7a7a7a"/></svg>
<svg style="left:207px;top:583.75px;" width="5" height="7" viewBox="0 0 5 7"><path d="M0.5 0.2V6.2L4.4 3.2Z" fill="#6a6a6a"/></svg>
<div style="left:218px;top:593px;width:562px;height:1px;background:#383838"></div>
<div style="left:21px;top:594.2px;width:194px;height:1px;background:#2c2c2c"></div>
<svg style="left:24.8px;top:599.1px;" width="4" height="6" viewBox="0 0 4 6"><path d="M0.2 0V5.4L3 2.7Z" fill="#d8d8d8"/></svg>
<div style="left:30.8px;top:595.8000000000001px;width:11.5px;height:11.5px;background:#050505;border:1px solid #383838"></div>
<svg style="left:45.6px;top:598.1px;" width="8" height="7" viewBox="0 0 8 7"><path d="M5.2 0.6H1.9Q0.6 0.6 0.6 1.9V5.1Q0.6 6.4 1.9 6.4H4.9Q6.2 6.4 6.2 5.1V4.9" fill="none" stroke="#7a7a7a" stroke-width="1"/><path d="M4.9 2.1L7.7 3.5L4.9 4.9Z" fill="#7a7a7a"/></svg>
<span class="t" style="left:54.8px;top:598.2px;font-size:9.6px;letter-spacing:-1.4px;color:#c4c4c4">旋转<span style="position:static;margin-left:3.2px;font-size:9.3px;letter-spacing:0;text-decoration:underline;text-underline-offset:1px">0.00°</span></span>
<svg style="left:187.5px;top:598.1px;" width="5" height="7" viewBox="0 0 5 7"><path d="M4.2 0.2V6.2L0.3 3.2Z" fill="#5a5a5a"/></svg>
<svg style="left:195.5px;top:597.2px;" width="8" height="8" viewBox="0 0 8 8"><path d="M4 0.3L7.4 3.8L4 7.3L0.6 3.8Z" fill="#7a7a7a"/></svg>
<svg style="left:207px;top:598.1px;" width="5" height="7" viewBox="0 0 5 7"><path d="M0.5 0.2V6.2L4.4 3.2Z" fill="#6a6a6a"/></svg>
<div style="left:218px;top:607px;width:562px;height:1px;background:#383838"></div>
<div style="left:21px;top:608.5500000000001px;width:194px;height:1px;background:#2c2c2c"></div>
<svg style="left:24.3px;top:614.45px;" width="6" height="4" viewBox="0 0 6 4"><path d="M0 0H5.2L2.6 3.2Z" fill="#d8d8d8"/></svg>
<div style="left:30.8px;top:610.1500000000001px;width:11.5px;height:11.5px;background:#050505;border:1px solid #383838"></div>
<svg style="left:30.8px;top:610.1500000000001px;" width="12" height="12" viewBox="0 0 12 12"><path d="M2.9 6.1L4.9 8L8.9 3.7" fill="none" stroke="#f4f4f4" stroke-width="1.5"/></svg>
<svg style="left:45.6px;top:612.45px;" width="8" height="7" viewBox="0 0 8 7"><path d="M5.2 0.6H1.9Q0.6 0.6 0.6 1.9V5.1Q0.6 6.4 1.9 6.4H4.9Q6.2 6.4 6.2 5.1V4.9" fill="none" stroke="#d0d0d0" stroke-width="1"/><path d="M4.9 2.1L7.7 3.5L4.9 4.9Z" fill="#d0d0d0"/></svg>
<span class="t" style="left:54.8px;top:612.5500000000001px;font-size:9.6px;letter-spacing:-1.4px;color:#d8d8d8">可见度和颜色</span>
<svg style="left:187.5px;top:612.45px;" width="5" height="7" viewBox="0 0 5 7"><path d="M4.2 0.2V6.2L0.3 3.2Z" fill="#e0e0e0"/></svg>
<svg style="left:195.5px;top:611.5500000000001px;" width="8" height="8" viewBox="0 0 8 8"><path d="M4 0.3L7.4 3.8L4 7.3L0.6 3.8Z" fill="#6cc43c"/></svg>
<svg style="left:207px;top:612.45px;" width="5" height="7" viewBox="0 0 5 7"><path d="M0.5 0.2V6.2L4.4 3.2Z" fill="#6a6a6a"/></svg>
<div style="left:218px;top:622px;width:562px;height:1px;background:#383838"></div>
<div style="left:35px;top:622.9px;width:180px;height:1px;background:#2c2c2c"></div>
<div style="left:35.5px;top:622.9px;width:180px;height:14.2px;background:#0a3a9c"></div>
<svg style="left:39.1px;top:627.8px;" width="4" height="6" viewBox="0 0 4 6"><path d="M0.2 0V5.4L3 2.7Z" fill="#d8d8d8"/></svg>
<div style="left:45.1px;top:624.5px;width:11.5px;height:11.5px;background:#050505;border:1px solid #383838"></div>
<svg style="left:45.1px;top:624.5px;" width="12" height="12" viewBox="0 0 12 12"><path d="M2.9 6.1L4.9 8L8.9 3.7" fill="none" stroke="#f4f4f4" stroke-width="1.5"/></svg>
<svg style="left:59.900000000000006px;top:626.8px;" width="8" height="7" viewBox="0 0 8 7"><path d="M5.2 0.6H1.9Q0.6 0.6 0.6 1.9V5.1Q0.6 6.4 1.9 6.4H4.9Q6.2 6.4 6.2 5.1V4.9" fill="none" stroke="#d0d0d0" stroke-width="1"/><path d="M4.9 2.1L7.7 3.5L4.9 4.9Z" fill="#d0d0d0"/></svg>
<span class="t" style="left:69.1px;top:626.9px;font-size:9.6px;letter-spacing:-1.4px;color:#e8e8ff">素材不透明度<span style="position:static;margin-left:3.2px;font-size:9.3px;letter-spacing:0;text-decoration:underline;text-underline-offset:1px">0.0%</span></span>
<svg style="left:187.5px;top:626.8px;" width="5" height="7" viewBox="0 0 5 7"><path d="M4.2 0.2V6.2L0.3 3.2Z" fill="#e0e0e0"/></svg>
<svg style="left:195.5px;top:625.9px;" width="8" height="8" viewBox="0 0 8 8"><path d="M4 0.3L7.4 3.8L4 7.3L0.6 3.8Z" fill="#6cc43c"/></svg>
<svg style="left:207px;top:626.8px;" width="5" height="7" viewBox="0 0 5 7"><path d="M0.5 0.2V6.2L4.4 3.2Z" fill="#8aa0d0"/></svg>
<div style="left:218px;top:636px;width:562px;height:1px;background:#383838"></div>
<div style="left:35px;top:637.25px;width:180px;height:1px;background:#2c2c2c"></div>
<svg style="left:39.1px;top:642.15px;" width="4" height="6" viewBox="0 0 4 6"><path d="M0.2 0V5.4L3 2.7Z" fill="#d8d8d8"/></svg>
<div style="left:45.1px;top:638.85px;width:11.5px;height:11.5px;background:#050505;border:1px solid #383838"></div>
<svg style="left:45.1px;top:638.85px;" width="12" height="12" viewBox="0 0 12 12"><path d="M2.9 6.1L4.9 8L8.9 3.7" fill="none" stroke="#f4f4f4" stroke-width="1.5"/></svg>
<svg style="left:59.900000000000006px;top:641.15px;" width="8" height="7" viewBox="0 0 8 7"><path d="M5.2 0.6H1.9Q0.6 0.6 0.6 1.9V5.1Q0.6 6.4 1.9 6.4H4.9Q6.2 6.4 6.2 5.1V4.9" fill="none" stroke="#d0d0d0" stroke-width="1"/><path d="M4.9 2.1L7.7 3.5L4.9 4.9Z" fill="#d0d0d0"/></svg>
<span class="t" style="left:69.1px;top:641.25px;font-size:9.6px;letter-spacing:-1.4px;color:#d8d8d8">背景颜色</span>
<svg style="left:187.5px;top:641.15px;" width="5" height="7" viewBox="0 0 5 7"><path d="M4.2 0.2V6.2L0.3 3.2Z" fill="#e0e0e0"/></svg>
<svg style="left:195.5px;top:640.25px;" width="8" height="8" viewBox="0 0 8 8"><path d="M4 0.3L7.4 3.8L4 7.3L0.6 3.8Z" fill="#ffffff"/></svg>
<svg style="left:207px;top:641.15px;" width="5" height="7" viewBox="0 0 5 7"><path d="M0.5 0.2V6.2L4.4 3.2Z" fill="#6a6a6a"/></svg>
<div style="left:218px;top:651px;width:562px;height:1px;background:#383838"></div>
<div style="left:35px;top:651.6px;width:180px;height:1px;background:#2c2c2c"></div>
<svg style="left:39.1px;top:656.5px;" width="4" height="6" viewBox="0 0 4 6"><path d="M0.2 0V5.4L3 2.7Z" fill="#d8d8d8"/></svg>
<div style="left:45.1px;top:653.2px;width:11.5px;height:11.5px;background:#050505;border:1px solid #383838"></div>
<svg style="left:45.1px;top:653.2px;" width="12" height="12" viewBox="0 0 12 12"><path d="M2.9 6.1L4.9 8L8.9 3.7" fill="none" stroke="#f4f4f4" stroke-width="1.5"/></svg>
<svg style="left:59.900000000000006px;top:655.5px;" width="8" height="7" viewBox="0 0 8 7"><path d="M5.2 0.6H1.9Q0.6 0.6 0.6 1.9V5.1Q0.6 6.4 1.9 6.4H4.9Q6.2 6.4 6.2 5.1V4.9" fill="none" stroke="#d0d0d0" stroke-width="1"/><path d="M4.9 2.1L7.7 3.5L4.9 4.9Z" fill="#d0d0d0"/></svg>
<span class="t" style="left:69.1px;top:655.6px;font-size:9.6px;letter-spacing:-1.4px;color:#d8d8d8">背景不透明度<span style="position:static;margin-left:3.2px;font-size:9.3px;letter-spacing:0;text-decoration:underline;text-underline-offset:1px">0.0%</span></span>
<svg style="left:187.5px;top:655.5px;" width="5" height="7" viewBox="0 0 5 7"><path d="M4.2 0.2V6.2L0.3 3.2Z" fill="#e0e0e0"/></svg>
<svg style="left:195.5px;top:654.6px;" width="8" height="8" viewBox="0 0 8 8"><path d="M4 0.3L7.4 3.8L4 7.3L0.6 3.8Z" fill="#ffffff"/></svg>
<svg style="left:207px;top:655.5px;" width="5" height="7" viewBox="0 0 5 7"><path d="M0.5 0.2V6.2L4.4 3.2Z" fill="#6a6a6a"/></svg>
<div style="left:218px;top:665px;width:562px;height:1px;background:#383838"></div>
<div style="left:21px;top:665.95px;width:194px;height:1px;background:#2c2c2c"></div>
<svg style="left:24.8px;top:670.85px;" width="4" height="6" viewBox="0 0 4 6"><path d="M0.2 0V5.4L3 2.7Z" fill="#d8d8d8"/></svg>
<div style="left:30.8px;top:667.5500000000001px;width:11.5px;height:11.5px;background:#050505;border:1px solid #383838"></div>
<svg style="left:45.6px;top:669.85px;" width="8" height="7" viewBox="0 0 8 7"><path d="M5.2 0.6H1.9Q0.6 0.6 0.6 1.9V5.1Q0.6 6.4 1.9 6.4H4.9Q6.2 6.4 6.2 5.1V4.9" fill="none" stroke="#7a7a7a" stroke-width="1"/><path d="M4.9 2.1L7.7 3.5L4.9 4.9Z" fill="#7a7a7a"/></svg>
<span class="t" style="left:54.8px;top:669.95px;font-size:9.6px;letter-spacing:-1.4px;color:#c4c4c4">边缘</span>
<svg style="left:187.5px;top:669.85px;" width="5" height="7" viewBox="0 0 5 7"><path d="M4.2 0.2V6.2L0.3 3.2Z" fill="#5a5a5a"/></svg>
<svg style="left:195.5px;top:668.95px;" width="8" height="8" viewBox="0 0 8 8"><path d="M4 0.3L7.4 3.8L4 7.3L0.6 3.8Z" fill="#7a7a7a"/></svg>
<svg style="left:207px;top:669.85px;" width="5" height="7" viewBox="0 0 5 7"><path d="M0.5 0.2V6.2L4.4 3.2Z" fill="#6a6a6a"/></svg>
<div style="left:218px;top:679px;width:562px;height:1px;background:#383838"></div>
<div style="left:21px;top:680.3000000000001px;width:194px;height:1px;background:#2c2c2c"></div>
<svg style="left:24.8px;top:685.2px;" width="4" height="6" viewBox="0 0 4 6"><path d="M0.2 0V5.4L3 2.7Z" fill="#d8d8d8"/></svg>
<div style="left:30.8px;top:681.9000000000001px;width:11.5px;height:11.5px;background:#050505;border:1px solid #383838"></div>
<svg style="left:45.6px;top:684.2px;" width="8" height="7" viewBox="0 0 8 7"><path d="M5.2 0.6H1.9Q0.6 0.6 0.6 1.9V5.1Q0.6 6.4 1.9 6.4H4.9Q6.2 6.4 6.2 5.1V4.9" fill="none" stroke="#7a7a7a" stroke-width="1"/><path d="M4.9 2.1L7.7 3.5L4.9 4.9Z" fill="#7a7a7a"/></svg>
<span class="t" style="left:54.8px;top:684.3000000000001px;font-size:9.6px;letter-spacing:-1.4px;color:#c4c4c4">投影</span>
<svg style="left:187.5px;top:684.2px;" width="5" height="7" viewBox="0 0 5 7"><path d="M4.2 0.2V6.2L0.3 3.2Z" fill="#5a5a5a"/></svg>
<svg style="left:195.5px;top:683.3000000000001px;" width="8" height="8" viewBox="0 0 8 8"><path d="M4 0.3L7.4 3.8L4 7.3L0.6 3.8Z" fill="#7a7a7a"/></svg>
<svg style="left:207px;top:684.2px;" width="5" height="7" viewBox="0 0 5 7"><path d="M0.5 0.2V6.2L4.4 3.2Z" fill="#6a6a6a"/></svg>
<div style="left:218px;top:694px;width:562px;height:1px;background:#383838"></div>
<svg style="left:129px;top:526.35px;" width="8" height="7" viewBox="0 0 8 7"><path d="M3.5 0.3V6.3L0.3 3.3ZM7.5 0.3V6.3L4.3 3.3Z" fill="#555"/></svg>
<svg style="left:140.5px;top:526.35px;" width="5" height="7" viewBox="0 0 5 7"><path d="M4.2 0.3V6.3L0.3 3.3Z" fill="#555"/></svg>
<svg style="left:148.5px;top:525.65px;" width="8.5" height="8.5" viewBox="0 0 8.5 8.5"><path d="M0.6 2.6V0.6H2.6M5.9 0.6H7.9V2.6M0.6 5.9V7.9H2.6M5.9 7.9H7.9V5.9" fill="none" stroke="#f0f0f0" stroke-width="1.2"/><circle cx="4.25" cy="4.25" r="1.9" fill="#f4f4f4"/></svg>
<svg style="left:160.5px;top:526.35px;" width="5" height="7" viewBox="0 0 5 7"><path d="M0.5 0.3V6.3L4.4 3.3Z" fill="#555"/></svg>
<svg style="left:169px;top:526.35px;" width="8" height="7" viewBox="0 0 8 7"><path d="M0.5 0.3V6.3L3.7 3.3ZM4.5 0.3V6.3L7.7 3.3Z" fill="#555"/></svg>
<div style="left:7px;top:508px;width:208px;height:1px;background:#2a2a2a"></div>
<div style="left:218px;top:507px;width:562px;height:1px;background:#1c1c1c"></div>
<div style="left:218px;top:622.9px;width:562px;height:14.2px;background:#0a3a9c"></div>
<svg style="left:50px;top:615px;" width="108" height="30" viewBox="0 0 108 30"><rect x="4.05" y="4.75" width="99" height="20.7" rx="3.2" fill="none" stroke="#000" stroke-opacity="0.55" stroke-width="4.7"/><rect x="4.05" y="4.75" width="99" height="20.7" rx="3.2" fill="none" stroke="#ee2a20" stroke-width="2.7"/></svg>
<svg style="left:731px;top:511.0px;" width="9" height="9" viewBox="0 0 9 9"><path d="M4.5 0.3L8.6 4.5L4.5 8.7L0.4 4.5Z" fill="#fff"/></svg>
<svg style="left:731px;top:611.45px;" width="9" height="9" viewBox="0 0 9 9"><path d="M4.5 0.3L8.6 4.5L4.5 8.7L0.4 4.5Z" fill="#fff"/></svg>
<svg style="left:731px;top:625.8px;" width="9" height="9" viewBox="0 0 9 9"><path d="M4.5 0.3L8.6 4.5L4.5 8.7L0.4 4.5Z" fill="#fff"/></svg>
<svg style="left:731px;top:640.15px;" width="9" height="9" viewBox="0 0 9 9"><path d="M4.5 0.3L8.6 4.5L4.5 8.7L0.4 4.5Z" fill="#fff"/></svg>
<svg style="left:731px;top:654.5px;" width="9" height="9" viewBox="0 0 9 9"><path d="M4.5 0.3L8.6 4.5L4.5 8.7L0.4 4.5Z" fill="#fff"/></svg>
<svg style="left:775px;top:511.0px;" width="5" height="9" viewBox="0 0 5 9"><path d="M4.5 0.5V8.5L0.5 4.5Z" fill="#f2d8d8"/></svg>
<svg style="left:775px;top:611.45px;" width="5" height="9" viewBox="0 0 5 9"><path d="M4.5 0.5V8.5L0.5 4.5Z" fill="#f2d8d8"/></svg>
<svg style="left:775px;top:625.8px;" width="5" height="9" viewBox="0 0 5 9"><path d="M4.5 0.5V8.5L0.5 4.5Z" fill="#f2d8d8"/></svg>
<svg style="left:773.5px;top:494.5px;" width="7" height="6" viewBox="0 0 7 6"><path d="M0.5 0.5H6.5V5.8Z" fill="#fff"/></svg>
<div style="left:778px;top:500px;width:2px;height:7px;background:#a01818"></div>
<div style="left:779px;top:507px;width:1px;height:191px;background:#237373"></div>
<div style="left:780.5px;top:507px;width:12px;height:190px;background:#111"></div>
<svg style="left:782.5px;top:512px;" width="8" height="5" viewBox="0 0 8 5"><path d="M0.5 4.5H7.5L4 0.5Z" fill="#6a6a6a"/></svg>
<svg style="left:782.5px;top:689px;" width="8" height="5" viewBox="0 0 8 5"><path d="M0.5 0.5H7.5L4 4.5Z" fill="#6a6a6a"/></svg>
<div style="left:218px;top:697px;width:562px;height:13px;background:#0c0c0c"></div>
<svg style="left:222px;top:701px;" width="5" height="6" viewBox="0 0 5 6"><path d="M4 0.2V5.4L0.5 2.8Z" fill="#8a8a8a"/></svg>
<svg style="left:772.5px;top:701px;" width="5" height="6" viewBox="0 0 5 6"><path d="M0.8 0.2V5.4L4.3 2.8Z" fill="#8a8a8a"/></svg>
<div style="left:7px;top:695px;width:208px;height:1px;background:#2a2a2a"></div>
<span class="t" style="left:10px;top:699.6px;letter-spacing:0;font-size:9.2px;color:#d4d4d4">Cur: 00:00:18:24</span>
<span class="t" style="left:90px;top:699.6px;letter-spacing:0;font-size:9.2px;color:#d4d4d4">Ttl: 00:00:19:18</span>
<div style="left:6px;top:720px;width:101px;height:16.5px;background:#060606;border:1px solid #343434;border-radius:2px"></div>
<span class="t" style="left:38.5px;top:724px;font-size:9.6px;letter-spacing:-1.4px;color:#d0d0d0">存为默认</span>
<div style="left:111.5px;top:720px;width:55.5px;height:16.5px;background:#060606;border:1px solid #343434;border-radius:2px"></div>
<span class="t" style="left:125px;top:724px;font-size:9.6px;letter-spacing:-1.4px;color:#d0d0d0">初始化</span>
<div style="left:681px;top:720px;width:54px;height:16.5px;background:#060606;border:1px solid #343434;border-radius:2px"></div>
<span class="t" style="left:700px;top:724px;font-size:9.6px;letter-spacing:-1.4px;color:#d0d0d0">确定</span>
<div style="left:739.5px;top:720px;width:53px;height:16.5px;background:#060606;border:1px solid #343434;border-radius:2px"></div>
<span class="t" style="left:757px;top:724px;font-size:9.6px;letter-spacing:-1.4px;color:#d0d0d0">取消</span>
<svg style="left:786px;top:735px;" width="11" height="11" viewBox="0 0 11 11"><path d="M10.5 1L1 10.5M10.5 4.5L4.5 10.5M10.5 8L8 10.5" stroke="#c8c8c8" stroke-width="1"/></svg>
<svg style="left:590px;top:290px;" width="55" height="105" viewBox="0 0 55 105"><path d="M9.5 6.2L6.8 20L11.2 17L49.5 102L16 15L21 14.5Z" fill="#ee2a1e"/></svg>
<span class="t" style="left:607.5px;top:706.6px;font-size:32.5px;letter-spacing:1.85px;transform:scaleX(0.885);transform-origin:left top;color:#a9a9a9;-webkit-text-stroke:1px #a9a9a9;text-shadow:0 0 1.5px #111">sanlang2021</span>
<div style="left:0px;top:0px;width:799px;height:748px;border:2px solid #0a3ea8;border-top-width:1px;"></div></body></html>
